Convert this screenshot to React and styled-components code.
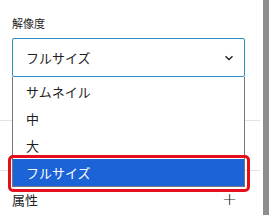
import styled, { createGlobalStyle } from 'styled-components'

const Global = createGlobalStyle`
  html, body {
    margin: 0;
    padding: 0;
    background: #fff;
  }
  body {
    font-family: 'Noto Sans CJK JP', 'Noto Sans', sans-serif;
    color: #1e1e1e;
  }
`

const Screen = styled.div`
  display: flex;
  width: 269px;
  height: 215px;
  overflow: hidden;
`

const Sidebar = styled.div`
  position: relative;
  width: 263px;
  height: 100%;
  overflow: hidden;
  display: flex;
  flex-direction: column;
`

const Scrollbar = styled.div`
  width: 6px;
  height: 100%;
  background: #8e8e8e;
`

const Section = styled.div`
  padding: 16px 18px 0 12px;
  height: 120px;
  box-sizing: border-box;
  flex-shrink: 0;
`

const Label = styled.div`
  font-size: 11px;
  line-height: 14px;
  margin-bottom: 8px;
`

const Select = styled.div`
  height: 39px;
  box-sizing: border-box;
  border: 1px solid #2a8fc0;
  border-radius: 2px;
  display: flex;
  align-items: center;
  justify-content: space-between;
  padding: 0 10px 0 13px;
  font-size: 13px;
`

const Divider = styled.div`
  width: 260px;
  height: 1px;
  flex-shrink: 0;
  background: #e2e2e2;
  margin-top: ${p => p.$gap || 0}px;
`

const HeaderRow = styled.div`
  display: flex;
  align-items: center;
  justify-content: space-between;
  flex-shrink: 0;
  height: 56px;
  padding: 0 26px 0 12px;
  font-size: 13px;
`

const Plus = styled.span`
  font-size: 18px;
  line-height: 1;
  font-family: 'DejaVu Sans', sans-serif;
  font-weight: 300;
`

const Dropdown = styled.ul`
  position: absolute;
  top: 77px;
  left: 12px;
  width: 233px;
  box-sizing: border-box;
  margin: 0;
  padding: 1px 0 0;
  list-style: none;
  background: #fff;
  border: 1px solid #767676;
  border-top: none;
`

const Option = styled.li`
  height: 27px;
  display: flex;
  align-items: center;
  padding-left: 13px;
  font-size: 13px;
  background: ${p => (p.$active ? '#1b63d6' : '#fff')};
  color: ${p => (p.$active ? '#fff' : '#1e1e1e')};
`

const Highlight = styled.div`
  position: absolute;
  top: 155px;
  left: 8px;
  width: 242px;
  height: 37px;
  box-sizing: border-box;
  border: 3px solid #e3101b;
  border-radius: 5px;
`

const Chevron = () => (
  <svg width="10" height="6" viewBox="0 0 10 6">
    <path d="M1.5 1.2 L5 4.5 L8.5 1.2" fill="none" stroke="#1e1e1e" strokeWidth="1.3" />
  </svg>
)

const options = ['サムネイル', '中', '大', 'フルサイズ']

export default function App() {
  return (
    <Screen>
      <Global />
      <Sidebar>
        <Section>
          <Label>解像度</Label>
          <Select>
            <span>フルサイズ</span>
            <Chevron />
          </Select>
        </Section>
        <Divider />
        <Divider $gap={49} />
        <HeaderRow>
          <span>属性</span>
          <Plus>+</Plus>
        </HeaderRow>
        <Dropdown>
          {options.map(o => (
            <Option key={o} $active={o === 'フルサイズ'}>{o}</Option>
          ))}
        </Dropdown>
        <Highlight />
      </Sidebar>
      <Scrollbar />
    </Screen>
  )
}
